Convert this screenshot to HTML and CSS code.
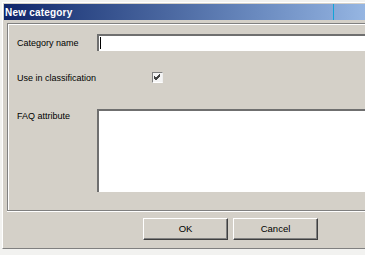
FILE: index.html
```html
<!DOCTYPE html>
<html lang="en">

<head>
    <meta charset="UTF-8">
    <title>New category</title>
    <link rel="stylesheet" href="styles.css">
</head>

<body>
    <div class="window">
        <div class="titlebar">
            <span class="title">New category</span>
            <span class="glint"></span>
        </div>
        <div class="content">
            <div class="panel">
                <div class="row row-name">
                    <label class="label">Category name</label>
                    <div class="field"><span class="caret"></span></div>
                </div>
                <div class="row row-check">
                    <label class="label">Use in classification</label>
                    <span class="check">
                        <svg width="9" height="9" viewBox="0 0 9 9">
                            <path d="M1 4 L3 6 L7 2 M1 5 L3 7 L7 3 M1 3 L3 5 L7 1" stroke="#444" stroke-width="1" fill="none" />
                        </svg>
                    </span>
                </div>
                <div class="row row-faq">
                    <label class="label">FAQ attribute</label>
                    <div class="area"></div>
                </div>
            </div>
            <div class="buttons">
                <div class="btn">OK</div>
                <div class="btn">Cancel</div>
            </div>
        </div>
    </div>
</body>

</html>
```

FILE: styles.css
```css
* {
    margin: 0;
    padding: 0;
    box-sizing: border-box;
}

body {
    height: 255px;
    overflow: hidden;
    background-color: #f2f2f0;
    font-family: "Liberation Sans", Arial, sans-serif;
    font-size: 9px;
    color: #000;
}

.window {
    margin: 2px 0 0 2px;
    width: 363px;
    height: 247px;
    overflow: hidden;
    border-top: 1px solid #fff;
    border-left: 1px solid #fff;
    border-bottom: 1px solid #808080;
    padding: 1px 0 0 1px;
    background-color: #d4d0c8;
}

.titlebar {
    display: flex;
    align-items: center;
    height: 16px;
    padding-left: 1px;
    background: linear-gradient(to right, #0f256a, #2b4684 20%, #4a67a0 45%, #6a8abf 70%, #86a6d6 90%, #96b6e2);
}

.title {
    color: #fff;
    font-weight: bold;
    font-size: 10px;
    letter-spacing: 0.2px;
}

.glint {
    margin-left: 261px;
    width: 1px;
    height: 16px;
    background-color: #12a4d8;
}

.content {
    padding: 3px 0 0 3px;
}

.panel {
    height: 188px;
    border-top: 1px solid #808080;
    border-left: 1px solid #808080;
    border-bottom: 1px solid #808080;
    box-shadow: inset 1px 1px #fff, 0 1px #fff;
    padding: 10px 0 0 9px;
}

.row {
    display: flex;
}

.label {
    width: 80px;
    flex-shrink: 0;
}

.row-name {
    align-items: center;
    height: 17px;
}

.field {
    flex: 1;
    height: 17px;
    background-color: #fff;
    border-top: 2px solid #6f6f6f;
    border-left: 2px solid #6f6f6f;
    padding: 1px 0 0 1px;
}

.caret {
    display: block;
    width: 1px;
    height: 12px;
    background-color: #000;
}

.row-check {
    align-items: center;
    margin-top: 21px;
    height: 11px;
}

.check {
    display: flex;
    align-items: center;
    justify-content: center;
    margin-left: 55px;
    width: 11px;
    height: 11px;
    background-color: #f4f4f4;
    border-top: 1px solid #808080;
    border-left: 1px solid #808080;
    border-right: 1px solid #eee;
    border-bottom: 1px solid #fff;
}

.row-faq {
    margin-top: 26px;
}

.row-faq .label {
    padding-top: 2px;
}

.area {
    flex: 1;
    height: 83px;
    background-color: #fff;
    border-top: 2px solid #6f6f6f;
    border-left: 2px solid #6f6f6f;
}

.buttons {
    display: flex;
    gap: 5px;
    padding: 7px 0 0 136px;
}

.btn {
    width: 85px;
    height: 22px;
    line-height: 19px;
    text-align: center;
    font-size: 9.5px;
    border-top: 1px solid #fff;
    border-left: 1px solid #fff;
    border-right: 1px solid #404040;
    border-bottom: 1px solid #404040;
    box-shadow: inset -1px -1px #808080;
}
```
